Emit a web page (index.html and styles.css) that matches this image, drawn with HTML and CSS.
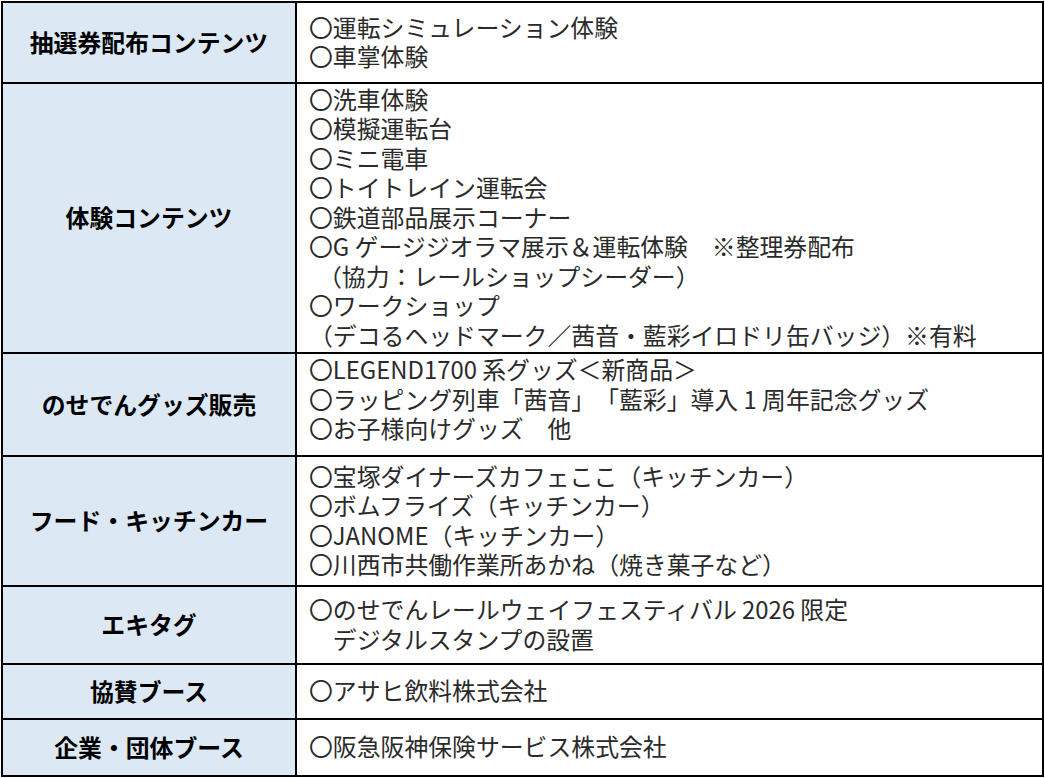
FILE: index.html
```html
<!DOCTYPE html>
<html lang="ja">
<head>
<meta charset="utf-8">
<title>イベント内容</title>
<link rel="stylesheet" href="styles.css">
</head>
<body>
<div class="table">
  <div class="label">抽選券配布コンテンツ</div>
  <div class="body">
    <p>〇運転シミュレーション体験</p>
    <p>〇車掌体験</p>
  </div>

  <div class="label">体験コンテンツ</div>
  <div class="body">
    <p>〇洗車体験</p>
    <p>〇模擬運転台</p>
    <p>〇ミニ電車</p>
    <p>〇トイトレイン運転会</p>
    <p>〇鉄道部品展示コーナー</p>
    <p>〇G ゲージジオラマ展示＆運転体験　※整理券配布</p>
    <p class="indent-s">（協力：レールショップシーダー）</p>
    <p>〇ワークショップ</p>
    <p>（デコるヘッドマーク／茜音・藍彩イロドリ缶バッジ）※有料</p>
  </div>

  <div class="label">のせでんグッズ販売</div>
  <div class="body body-top">
    <p>〇LEGEND1700 系グッズ＜新商品＞</p>
    <p>〇ラッピング列車「茜音」「藍彩」導入 1 周年記念グッズ</p>
    <p>〇お子様向けグッズ　他</p>
  </div>

  <div class="label">フード・キッチンカー</div>
  <div class="body">
    <p>〇宝塚ダイナーズカフェここ（キッチンカー）</p>
    <p>〇ボムフライズ（キッチンカー）</p>
    <p>〇JANOME（キッチンカー）</p>
    <p>〇川西市共働作業所あかね（焼き菓子など）</p>
  </div>

  <div class="label">エキタグ</div>
  <div class="body">
    <p>〇のせでんレールウェイフェスティバル 2026 限定</p>
    <p>　デジタルスタンプの設置</p>
  </div>

  <div class="label">協賛ブース</div>
  <div class="body">
    <p>〇アサヒ飲料株式会社</p>
  </div>

  <div class="label">企業・団体ブース</div>
  <div class="body">
    <p>〇阪急阪神保険サービス株式会社</p>
  </div>
</div>
</body>
</html>
```

FILE: styles.css
```css
* {
  box-sizing: border-box;
}

html,
body {
  margin: 0;
  padding: 0;
  background: #ffffff;
}

body {
  padding: 1px 0 0 1px;
  font-family: "Noto Sans CJK JP", "Noto Sans", sans-serif;
  font-size: 23.85px;
  color: #2a2a2a;
  text-spacing-trim: space-all;
}

.table {
  display: grid;
  grid-template-columns: 294px 747px;
  grid-template-rows: 81px 270px 103px 130px 78px 55px 57px;
  border-top: 2px solid #000;
  border-left: 2px solid #000;
  width: 1043px;
}

.label,
.body {
  border-right: 2px solid #000;
  border-bottom: 2px solid #000;
  display: flex;
  flex-direction: column;
  justify-content: center;
}

.label {
  background: #dde8f5;
  align-items: center;
  font-weight: 700;
  color: #000;
  line-height: 1;
  padding-bottom: 2px;
}

.body {
  padding: 0 0 3px 12px;
  background: #ffffff;
}

.body p {
  margin: 0;
  line-height: 29.5px;
  white-space: nowrap;
}

.body-top {
  padding-bottom: 12px;
}

.body .indent-s {
  padding-left: 9px;
}
```
